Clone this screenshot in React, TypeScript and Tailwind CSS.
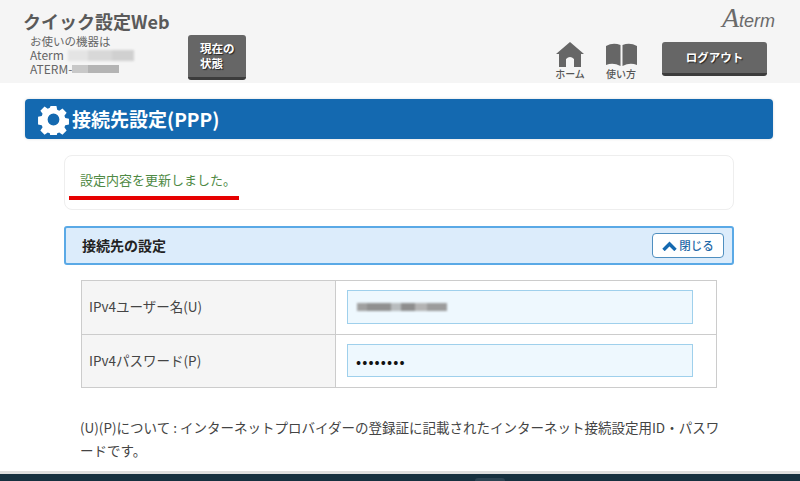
const font = { fontFamily: '"Noto Sans CJK JP", "Noto Sans", sans-serif' };

function Gear() {
  return (
    <svg width="31" height="31" viewBox="0 0 24 24" className="shrink-0">
      <path
        fill="#fff"
        fillRule="evenodd"
        d="M9.6 1h4.8l.6 3.1 1.7.7 2.6-1.8 3.4 3.4-1.8 2.6.7 1.7 3 .6v4.8l-3 .6-.7 1.7 1.8 2.6-3.4 3.4-2.6-1.8-1.7.7-.6 3H9.6l-.6-3-1.7-.7-2.6 1.8-3.4-3.4 1.8-2.6-.7-1.7-3-.6V9.7l3-.6.7-1.7L1.3 4.8 4.7 1.4l2.6 1.8L9 2.5z M12 7.2a4.8 4.8 0 1 0 0 9.6 4.8 4.8 0 0 0 0-9.6z"
        transform="translate(.6 .6) scale(.95)"
      />
    </svg>
  );
}

export default function App() {
  return (
    <div className="relative h-[481px] w-[800px] overflow-hidden bg-white flex flex-col" style={font}>
      <header className="h-[83px] shrink-0 bg-[#f5f5f5] flex pl-[23px] pr-[25px]">
        <div className="pt-[9px] w-[165px]">
          <div className="text-[18px] leading-[25px] font-bold text-[#5a5a5a]">クイック設定Web</div>
          <div className="pl-[7px] text-[11.5px] leading-[14px] text-[#666]">
            <div className="h-[14px]">お使いの機器は</div>
            <div className="h-[14px] flex items-center text-[12px]">
              Aterm
              <span className="ml-[4px] h-[13px] w-[66px] flex items-center blur-[1px]">
                <span className="h-[11px] w-[20px] bg-[#e4e4e4]" />
                <span className="h-[11px] w-[24px] bg-[#d8d8d8]" />
                <span className="h-[11px] w-[22px] bg-[#d0d0d0]" />
              </span>
            </div>
            <div className="h-[14px] flex items-center text-[12px]">
              ATERM-
              <span className="h-[8px] w-[47px] flex blur-[0.5px]">
                <span className="h-full w-[16px] bg-[#c8c8c8]" />
                <span className="h-full w-[31px] bg-[#b4b4b4]" />
              </span>
            </div>
          </div>
        </div>
        <div className="pt-[35px]">
          <div className="h-[45px] w-[58px] rounded-[3px] bg-[#666] border-b-[3px] border-[#3c3c3c] text-white text-[11.5px] leading-[15px] font-bold pl-[12px] pt-[6px] [text-shadow:1px_1px_1px_#222]">
            現在の<br />状態
          </div>
        </div>
        <div className="ml-auto flex flex-col items-end">
          <div className="h-[42px] pt-[4px] flex items-baseline text-[#6a6a6a] italic">
            <span className="text-[28px] leading-[28px]" style={{ fontFamily: '"Liberation Serif", serif' }}>A</span>
            <span className="text-[18px] leading-[28px] font-light" style={{ fontFamily: '"Liberation Sans", sans-serif' }}>term</span>
          </div>
          <div className="flex items-start pr-[8px]">
            <div className="w-[30px] flex flex-col items-center text-[#555] mr-[19px]">
              <svg width="28" height="26" viewBox="0 0 28 26">
                <path fill="#666" d="M14 0 L28 12 L25 12 L25 25 L18 25 L18 17 Q14 13 10 17 L10 25 L3 25 L3 12 L0 12 Z" />
              </svg>
              <div className="text-[10px] leading-[10px] mt-[1px] whitespace-nowrap font-medium">ホーム</div>
            </div>
            <div className="w-[34px] flex flex-col items-center text-[#555] mr-[24px]">
              <svg width="33" height="26" viewBox="0 0 33 26">
                <path fill="#666" d="M1 4 Q8 0 15.5 3 V24 Q8 20 1 23 Z M17.5 3 Q25 0 32 4 V23 Q25 20 17.5 24 Z" />
              </svg>
              <div className="text-[10px] leading-[10px] mt-[1px] whitespace-nowrap font-medium">使い方</div>
            </div>
            <div className="h-[34px] w-[105px] rounded-[3px] bg-[#666] border-b-[3px] border-[#3c3c3c] text-white text-[11.5px] font-bold flex items-center justify-center [text-shadow:1px_1px_1px_#222]">
              ログアウト
            </div>
          </div>
        </div>
      </header>

      <main className="flex-1 relative pl-[25px] pr-[27px] pt-[16px]">
        <div className="h-[40px] rounded-[4px] bg-[#1469b0] flex items-center pl-[13px] gap-[3px] text-white text-[19px] font-bold shadow-[0_0_3px_rgba(0,0,0,0.15)]">
          <Gear />
          <span>接続先設定(PPP)</span>
        </div>

        <div className="mx-[39px] mt-[16px] flex flex-col">
          <div className="relative h-[55px] rounded-[8px] border border-[#eeeeee] pl-[15px] flex items-center text-[13px] text-[#4f8a45] pb-[5px]">
            設定内容を更新しました。
            <div className="absolute left-[4px] top-[40px] h-[4px] w-[170px] bg-[#e60000]" />
          </div>

          <div className="mt-[16px] h-[39px] rounded-[3px] border-2 border-[#5aa9e6] bg-[#dcecfb] flex items-center justify-between pl-[16px] pr-[8px]">
            <span className="text-[14px] font-bold text-[#222]">接続先の設定</span>
            <div className="h-[25px] w-[72px] rounded-[4px] border border-[#4f8fc0] bg-white flex items-center justify-center gap-[2px] text-[11.5px] font-medium text-[#1f6aa8]">
              <svg width="15" height="10" viewBox="0 0 15 10">
                <path d="M1.5 9 L7.5 3 L13.5 9" fill="none" stroke="#1469b0" strokeWidth="3.4" />
              </svg>
              閉じる
            </div>
          </div>

          <div className="mx-[17px] mt-[15px] h-[108px] border border-[#cccccc] flex flex-col text-[13.5px] text-[#444]">
            <div className="flex flex-1 border-b border-[#cccccc]">
              <div className="w-[254px] bg-[#f5f5f5] border-r border-[#cccccc] pl-[7px] pb-[2px] flex items-center">IPv4ユーザー名(U)</div>
              <div className="flex-1 pl-[11px] pr-[23px] flex items-center">
                <div className="w-full h-[34px] border border-[#9fd0ec] bg-[#eef8fe] pl-[9px] flex items-center">
                  <span className="flex h-[8px] w-[90px] blur-[1px]">
                    <span className="h-full w-[10px] bg-[#a0a0a0]" />
                    <span className="h-full w-[24px] bg-[#909090]" />
                    <span className="h-full w-[10px] bg-[#b8bcbe]" />
                    <span className="h-full w-[14px] bg-[#8e8e8e]" />
                    <span className="h-full w-[12px] bg-[#b4b4b4]" />
                    <span className="h-full w-[20px] bg-[#9c9c9c]" />
                  </span>
                </div>
              </div>
            </div>
            <div className="flex flex-1">
              <div className="w-[254px] bg-[#f5f5f5] border-r border-[#cccccc] pl-[7px] pb-[2px] flex items-center">IPv4パスワード(P)</div>
              <div className="flex-1 pl-[11px] pr-[23px] flex items-center">
                <div className="w-full h-[33px] border border-[#9fd0ec] bg-[#eef8fe] pl-[8px] flex items-center text-[15px] text-[#111] tracking-[1.1px]">
                  ••••••••
                </div>
              </div>
            </div>
          </div>
        </div>

        <p className="ml-[55px] mt-[28px] w-[640px] text-[13.5px] leading-[23px] text-[#444]">
          (U)(P)について : インターネットプロバイダーの登録証に記載されたインターネット接続設定用ID・パスワードです。
        </p>
      </main>

      <div className="h-[3px] shrink-0 bg-[#dedede]" />
      <div className="h-[7px] shrink-0 bg-[#16303f]" />
      <div className="absolute left-[475px] bottom-0 h-[3px] w-[30px] rounded-t-[3px] bg-[#2b4352]" />
    </div>
  );
}
